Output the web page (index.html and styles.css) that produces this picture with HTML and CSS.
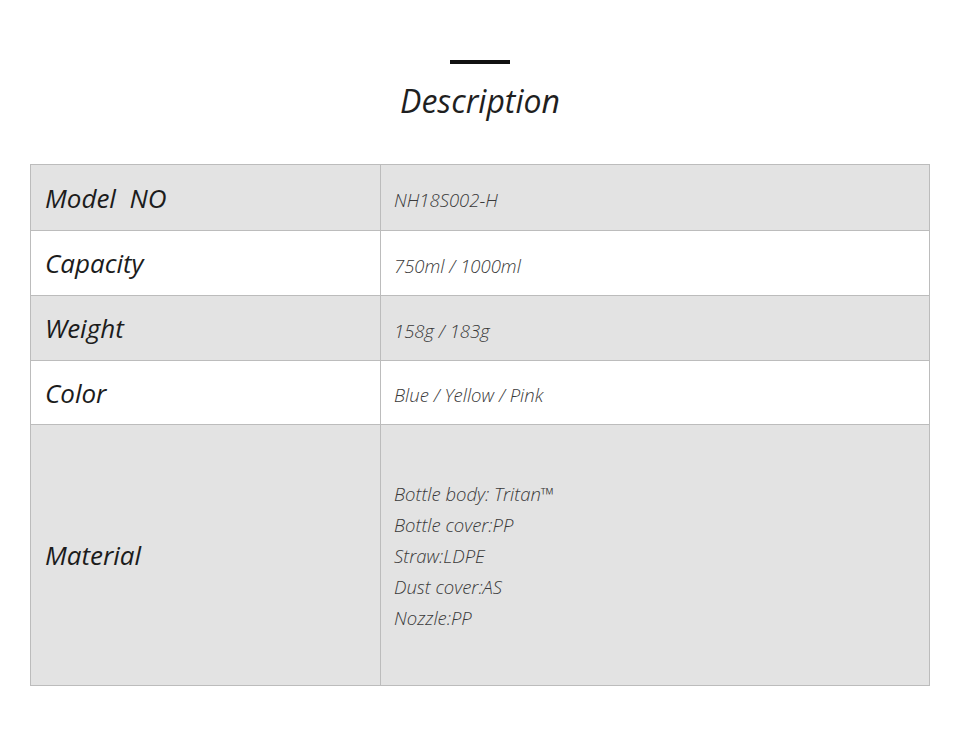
FILE: index.html
```html
<!DOCTYPE html>
<html>
<head>
<meta charset="utf-8">
<link rel="stylesheet" href="styles.css">
</head>
<body>
<div class="page">
  <div class="head">
    <div class="bar"></div>
    <h1 class="title">Description</h1>
  </div>
  <table class="spec">
    <tr class="r1 gray"><td class="label">Model&nbsp; NO</td><td class="value">NH18S002-H</td></tr>
    <tr class="r2"><td class="label">Capacity</td><td class="value">750ml / 1000ml</td></tr>
    <tr class="r3 gray"><td class="label">Weight</td><td class="value">158g / 183g</td></tr>
    <tr class="r4"><td class="label">Color</td><td class="value">Blue / Yellow / Pink</td></tr>
    <tr class="r5 gray"><td class="label">Material</td><td class="value list">
      <div>Bottle body: Tritan™</div>
      <div>Bottle cover:PP</div>
      <div>Straw:LDPE</div>
      <div>Dust cover:AS</div>
      <div>Nozzle:PP</div>
    </td></tr>
  </table>
</div>
</body>
</html>
```
FILE: styles.css
```css
html, body {
  margin: 0;
  padding: 0;
  background: #fff;
}
.page {
  width: 960px;
  height: 746px;
  font-family: "Open Sans", "Noto Sans", sans-serif;
  color: #1f1f1f;
}
.head {
  padding-top: 60px;
  height: 164px;
  box-sizing: border-box;
  display: flex;
  flex-direction: column;
  align-items: center;
}
.bar {
  flex-shrink: 0;
  width: 60px;
  height: 4px;
  background: #111;
}
.title {
  margin: 15px 0 0;
  font-size: 32px;
  line-height: 44px;
  font-style: italic;
  font-weight: 400;
  color: #1f1f1f;
}
.spec {
  margin-left: 30px;
  width: 900px;
  border-collapse: collapse;
  border: 1px solid #bcbcbc;
}
.spec td {
  border: 1px solid #bcbcbc;
  padding: 0;
  font-style: italic;
  vertical-align: middle;
}
.gray td {
  background: #e3e3e3;
}
.label {
  width: 335px;
  padding-left: 14px !important;
  font-size: 26px;
  color: #1c1c1c;
}
.value {
  padding-left: 13px !important;
  font-size: 18.5px;
  font-weight: 300;
  color: #3a3a3a;
  padding-top: 4px !important;
}
.r1 { height: 66px; }
.r2 { height: 65px; }
.r3 { height: 65px; }
.r4 { height: 64px; }
.r5 { height: 261px; }
.list div {
  line-height: 31px;
}
.list {
  padding-top: 0 !important;
}
```
